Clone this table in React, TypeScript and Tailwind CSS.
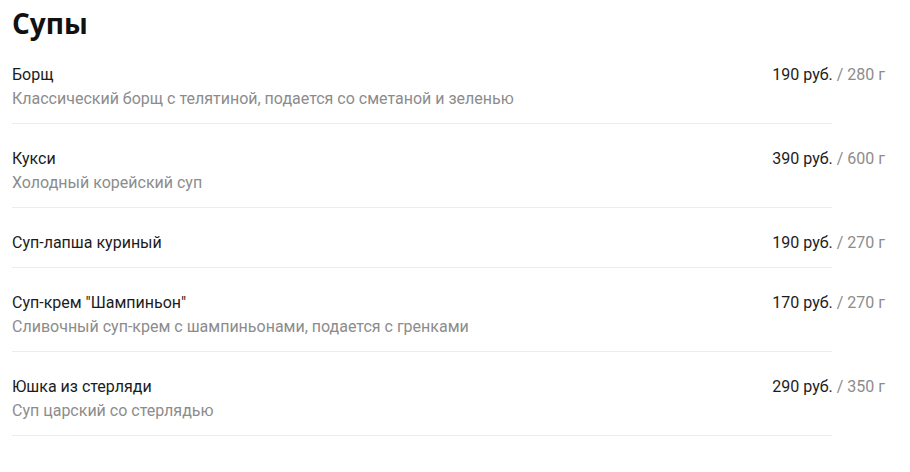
import React from 'react';

type Dish = {
  name: string;
  description?: string;
  price: number;
  weight: number;
};

const soups: Dish[] = [
  { name: 'Борщ', description: 'Классический борщ с телятиной, подается со сметаной и зеленью', price: 190, weight: 280 },
  { name: 'Кукси', description: 'Холодный корейский суп', price: 390, weight: 600 },
  { name: 'Суп-лапша куриный', price: 190, weight: 270 },
  { name: 'Суп-крем "Шампиньон"', description: 'Сливочный суп-крем с шампиньонами, подается с гренками', price: 170, weight: 270 },
  { name: 'Юшка из стерляди', description: 'Суп царский со стерлядью', price: 290, weight: 350 },
];

const DishRow: React.FC<{ dish: Dish }> = ({ dish }) => (
  <li className="mb-[23px]">
    <div className="flex justify-between items-start w-[873px]">
      <div>
        <div className="text-base leading-6 text-[#1c1c1c]">{dish.name}</div>
        {dish.description && (
          <div className="text-base leading-6 text-[#8c8c8c]">{dish.description}</div>
        )}
      </div>
      <div className="text-base leading-6 whitespace-nowrap">
        <span className="text-[#1c1c1c]">{dish.price} руб.</span>
        <span className="text-[#8c8c8c]"> / {dish.weight} г</span>
      </div>
    </div>
    <div className="mt-3 w-[820px] h-px bg-[#ececec]" />
  </li>
);

const App: React.FC = () => {
  return (
    <div className="min-h-screen bg-white px-3 pt-[5px] font-['Roboto',sans-serif]">
      {/* Section title */}
      <h1 className="text-[28px] leading-9 font-bold text-[#111] font-['Open_Sans',sans-serif] mb-[22px]">
        Супы
      </h1>
      <ul>
        {soups.map(d => (
          <DishRow key={d.name} dish={d} />
        ))}
      </ul>
    </div>
  );
};

export default App;
